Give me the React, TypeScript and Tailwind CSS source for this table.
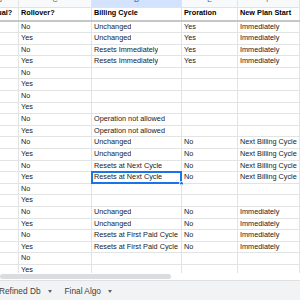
const rows: [string, string, string, string][] = [
  ["No", "Unchanged", "Yes", "Immediately"],
  ["Yes", "Unchanged", "Yes", "Immediately"],
  ["No", "Resets Immediately", "Yes", "Immediately"],
  ["Yes", "Resets Immediately", "Yes", "Immediately"],
  ["No", "", "", ""],
  ["Yes", "", "", ""],
  ["No", "", "", ""],
  ["Yes", "", "", ""],
  ["No", "Operation not allowed", "", ""],
  ["Yes", "Operation not allowed", "", ""],
  ["No", "Unchanged", "No", "Next Billing Cycle"],
  ["Yes", "Unchanged", "No", "Next Billing Cycle"],
  ["No", "Resets at Next Cycle", "No", "Next Billing Cycle"],
  ["Yes", "Resets at Next Cycle", "No", "Next Billing Cycle"],
  ["No", "", "", ""],
  ["Yes", "", "", ""],
  ["No", "Unchanged", "No", "Immediately"],
  ["Yes", "Unchanged", "No", "Immediately"],
  ["No", "Resets at First Paid Cycle", "No", "Immediately"],
  ["Yes", "Resets at First Paid Cycle", "No", "Immediately"],
  ["No", "", "", ""],
  ["Yes", "", "", ""],
];

const SELECTED = 13;

const cols = "grid grid-cols-[38px_73px_90px_56px_62px]";
const cell = "border-r border-[#e2e3e3] px-[2px] overflow-hidden whitespace-nowrap flex items-center";

function Caret() {
  return (
    <span className="h-0 w-0 border-x-[2.5px] border-t-[3px] border-x-transparent border-t-[#5f6368]" />
  );
}

export default function App() {
  return (
    <div className="flex h-[300px] w-[300px] flex-col overflow-hidden bg-white font-['Liberation_Sans',Arial,sans-serif]">
      {/* grid */}
      <div className="h-[273px] overflow-hidden">
        <div className="-ml-[19px] w-[319px]">
          {/* column letters, scrolled so only their bottoms show */}
          <div className={`${cols} h-[8px] border-b border-[#e2e3e3] bg-[#f8f9fa] text-[7px] text-[#5f6368]`}>
            {["B", "C", "D", "E", "F"].map((l) => (
              <div
                key={l}
                className={`flex justify-center overflow-hidden border-r border-[#e2e3e3] leading-none ${
                  l === "D" ? "bg-[#d3e3fd] text-[#0b57d0]" : ""
                }`}
              >
                <span className="-mt-[4px]">{l}</span>
              </div>
            ))}
          </div>

          {/* header */}
          <div className={`${cols} h-[13.5px] border-b-2 border-[#c4c7c5] text-[7.3px] font-bold text-black`}>
            <div className={cell}>Annual?</div>
            <div className={cell}>Rollover?</div>
            <div className={cell}>Billing Cycle</div>
            <div className={cell}>Proration</div>
            <div className={cell}>New Plan Start</div>
          </div>

          {rows.map((r, i) => (
            <div key={i} className={`${cols} h-[11.6px] border-b border-[#e2e3e3] text-[7.3px] text-[#202124]`}>
              <div className={cell} />
              <div className={cell}>{r[0]}</div>
              <div className={`${cell} relative overflow-visible`}>
                <span className="overflow-hidden">{r[1]}</span>
                {i === SELECTED && (
                  <>
                    <span className="absolute -left-px -right-px -top-px -bottom-px border-2 border-[#1a73e8]" />
                    <span className="absolute -bottom-[3px] -right-[3px] h-[5px] w-[5px] rounded-full border border-white bg-[#1a73e8]" />
                  </>
                )}
              </div>
              <div className={cell}>{r[2]}</div>
              <div className={cell}>{r[3]}</div>
            </div>
          ))}
        </div>
      </div>

      {/* horizontal scrollbar */}
      <div className="flex h-[7px] items-center bg-white">
        <div className="h-[5px] w-[171px] rounded-full bg-[#dadce0]" />
      </div>

      {/* sheet tabs */}
      <div className="flex flex-1 items-center gap-[13px] border-t border-[#e0e0e0] bg-[#f1f3f4] pt-[1px] text-[8.3px] text-[#3c4043]">
        <div className="-ml-[1px] flex items-center gap-[7px]">
          <span>Refined Db</span>
          <Caret />
        </div>
        <div className="flex items-center gap-[7px]">
          <span>Final Algo</span>
          <Caret />
        </div>
      </div>
    </div>
  );
}
